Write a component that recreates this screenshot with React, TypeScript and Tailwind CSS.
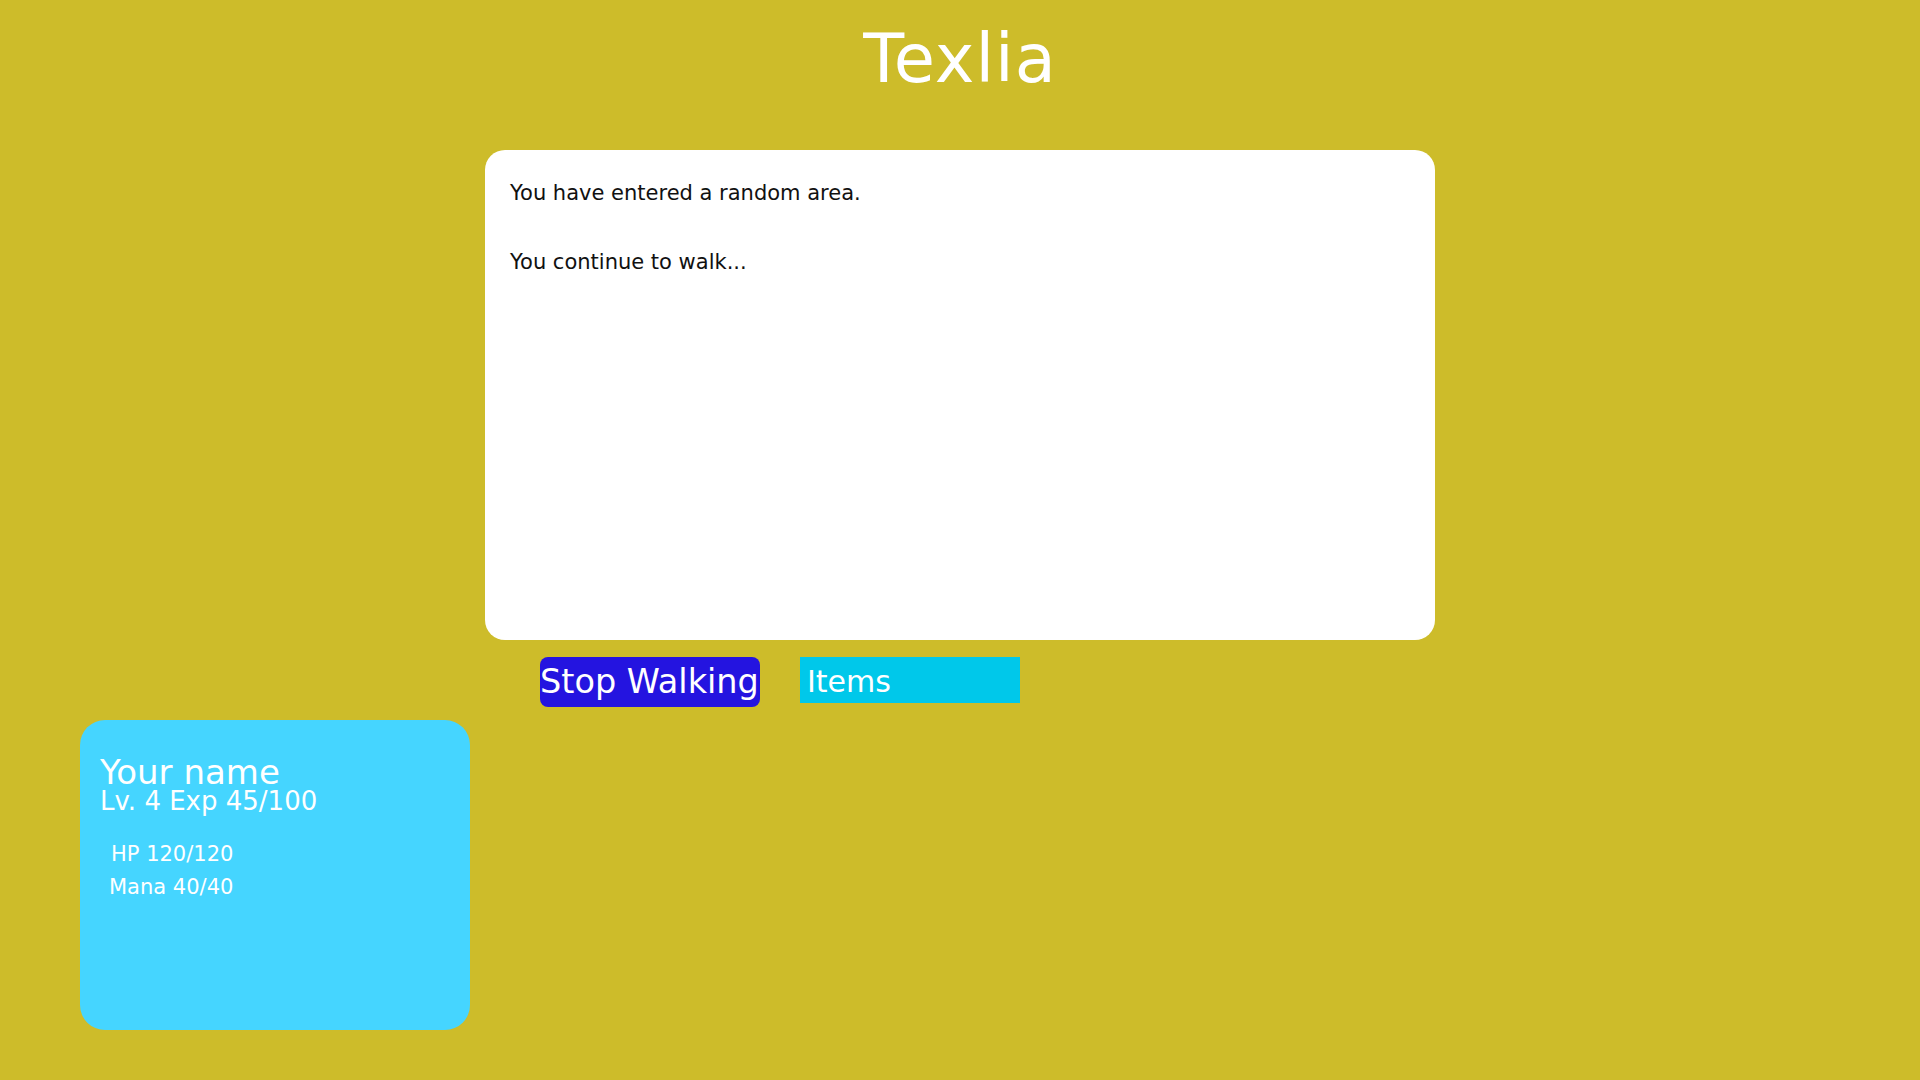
export default function App() {
  return (
    <div
      className="flex min-h-screen w-full flex-col bg-[#cdbc2a]"
      style={{ fontFamily: '"DejaVu Sans", Verdana, sans-serif' }}
    >
      <h1 className="pt-[21px] text-center text-[67px] leading-[76px] tracking-[1px] text-white">Texlia</h1>

      <div className="mx-auto mt-[53px] h-[490px] w-[950px] rounded-[20px] bg-white px-[25px] pt-[31px] text-[21px] leading-[25px] text-[#111]">
        <p>You have entered a random area.</p>
        <p className="mt-[44px]">You continue to walk...</p>
      </div>

      <div className="mt-[17px] flex items-start gap-[40px] pl-[540px]">
        <button className="h-[50px] w-[220px] rounded-[8px] bg-[#2414e0] text-left text-[33.5px] leading-[50px] whitespace-nowrap text-white">
          Stop Walking
        </button>
        <button className="h-[46px] w-[220px] bg-[#00c8ea] pt-[3px] pl-[7px] text-left text-[30px] leading-[43px] text-white">
          Items
        </button>
      </div>

      <div className="mt-[13px] ml-[80px] h-[310px] w-[390px] rounded-[25px] bg-[#45d5ff] pl-[20px] pt-[36px] text-white">
        <div className="text-[34px] leading-[32px]">Your name</div>
        <div className="text-[26px] leading-[27px]">Lv. 4 Exp 45/100</div>
        <div className="mt-[23px] pl-[9px] text-[21px] leading-[33px]">
          <div className="ml-[2px]">HP 120/120</div>
          <div>Mana 40/40</div>
        </div>
      </div>
    </div>
  )
}
